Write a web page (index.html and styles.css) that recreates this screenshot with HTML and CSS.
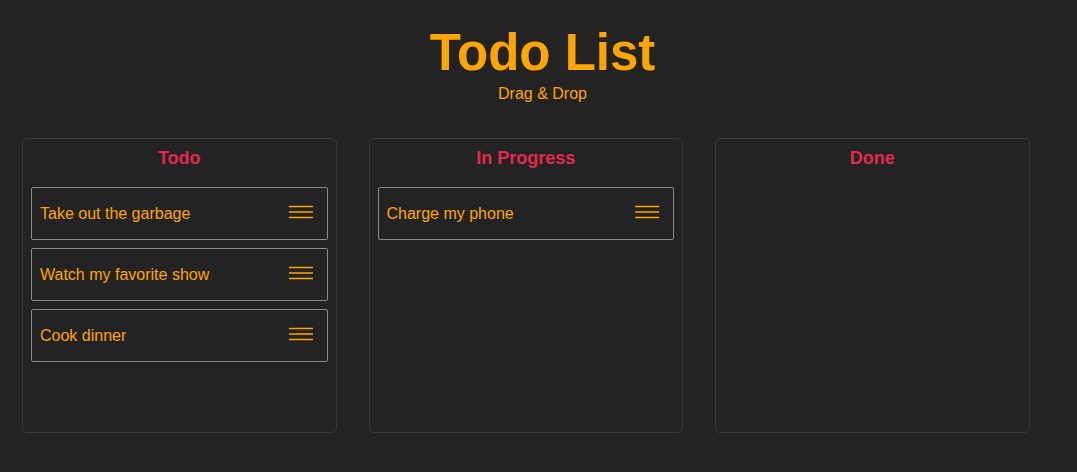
FILE: index.html
```html
<!DOCTYPE html>
<html lang="en">
<head>
<meta charset="utf-8">
<title>Todo List</title>
<link rel="stylesheet" href="styles.css">
</head>
<body>
<header class="header">
  <h1 class="title">Todo List</h1>
  <p class="subtitle">Drag &amp; Drop</p>
</header>
<main class="board">
  <section class="column">
    <h2 class="column-title">Todo</h2>
    <div class="card"><span class="card-text">Take out the garbage</span><svg class="handle" viewBox="0 0 24 14" width="24" height="14"><path d="M0 1.5H24M0 7H24M0 12.5H24"/></svg></div>
    <div class="card"><span class="card-text">Watch my favorite show</span><svg class="handle" viewBox="0 0 24 14" width="24" height="14"><path d="M0 1.5H24M0 7H24M0 12.5H24"/></svg></div>
    <div class="card"><span class="card-text">Cook dinner</span><svg class="handle" viewBox="0 0 24 14" width="24" height="14"><path d="M0 1.5H24M0 7H24M0 12.5H24"/></svg></div>
  </section>
  <section class="column">
    <h2 class="column-title">In Progress</h2>
    <div class="card"><span class="card-text">Charge my phone</span><svg class="handle" viewBox="0 0 24 14" width="24" height="14"><path d="M0 1.5H24M0 7H24M0 12.5H24"/></svg></div>
  </section>
  <section class="column">
    <h2 class="column-title">Done</h2>
  </section>
</main>
</body>
</html>
```
FILE: styles.css
```css
html, body {
  margin: 0;
  padding: 0;
  background: #232323;
  font-family: "Liberation Sans", Arial, sans-serif;
  color: #ffa500;
}

.header {
  padding: 27px 0 0 8px;
  text-align: center;
}

.title {
  margin: 0;
  font-size: 51px;
  line-height: 51px;
  font-weight: bold;
  color: #ffa500;
}

.subtitle {
  margin: 7px 0 0;
  font-size: 16px;
  line-height: 18px;
}

.board {
  display: flex;
  gap: 32px;
  padding: 35px 0 0 22px;
}

.column {
  box-sizing: border-box;
  width: 314.5px;
  height: 295px;
  border: 1px solid #383838;
  border-radius: 5px;
  padding: 9px 8px 8px;
  display: flex;
  flex-direction: column;
  gap: 8px;
}

.column-title {
  margin: 0 0 10px;
  text-align: center;
  font-size: 18px;
  line-height: 21px;
  font-weight: bold;
  color: #e2294f;
}

.card {
  box-sizing: border-box;
  height: 53px;
  border: 1px solid #8a8a8a;
  border-radius: 2px;
  padding: 0 14px 0 8px;
  display: flex;
  align-items: center;
  justify-content: space-between;
}

.card-text {
  font-size: 16px;
  line-height: 18px;
  color: #ffa500;
}

.handle {
  display: block;
  margin-bottom: 3px;
  fill: none;
  stroke: #ffa500;
  stroke-width: 1.5;
}
```
